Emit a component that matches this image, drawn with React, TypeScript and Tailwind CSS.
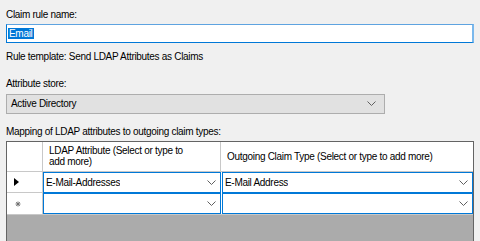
import React from 'react'

const FONT = { fontFamily: '"Liberation Sans", Arial, sans-serif' }

function Chevron() {
  return (
    <svg width="9" height="6" viewBox="0 0 9 6" className="shrink-0">
      <polyline points="0.5,0.5 4.5,4.5 8.5,0.5" fill="none" stroke="#606060" strokeWidth="1" />
    </svg>
  )
}

function ComboCell({ value, className }: { value?: string; className: string }) {
  return (
    <div className={`flex items-center justify-between border border-[#0078d7] bg-white pl-[2px] pr-[4px] ${className}`}>
      <span className="truncate">{value}</span>
      <Chevron />
    </div>
  )
}

export default function App() {
  return (
    <div
      className="w-[480px] h-[241px] overflow-hidden bg-[#f0f0f0] px-[6px] pt-[9px] text-[10px] leading-[12px] tracking-[-0.3px] text-black"
      style={FONT}
    >
      <div>Claim rule name:</div>

      {/* name input */}
      <div className="mt-[3px] h-[19px] w-[468px] border border-[#0078d7] border-t-[#5ea3e0] border-r-2 border-r-[#7ab8ec] bg-white flex items-center pl-[1px]">
        <span className="bg-[#0078d7] text-white px-[1px] leading-[11px]">Email</span>
      </div>

      <div className="mt-[8px]">Rule template: Send LDAP Attributes as Claims</div>

      <div className="mt-[15px]">Attribute store:</div>

      {/* attribute store select */}
      <div className="mt-[4px] h-[20px] w-[379px] border border-[#adadad] bg-[#e1e1e1] flex items-center justify-between pl-[4px] pr-[8px]">
        <span>Active Directory</span>
        <Chevron />
      </div>

      <div className="mt-[12px]">Mapping of LDAP attributes to outgoing claim types:</div>

      {/* mapping grid */}
      <div className="mt-[3px] w-[468px] h-[110px] border border-[#646464] bg-[#ababab] flex flex-col">
        <div className="flex h-[30px] bg-white">
          <div className="w-[36px] border-r border-b border-[#c8c8c8]" />
          <div className="w-[178px] border-r border-b border-[#c8c8c8] pl-[6px] pt-[3px] leading-[11px]">
            LDAP Attribute (Select or type to
            <br />
            add more)
          </div>
          <div className="flex-1 border-b border-[#c8c8c8] pl-[6px] flex items-center">
            Outgoing Claim Type (Select or type to add more)
          </div>
        </div>

        <div className="flex h-[21px] bg-white">
          <div className="w-[36px] border-r border-b border-[#c8c8c8] flex items-center pl-[7px]">
            <svg width="5" height="8" viewBox="0 0 5 8">
              <polygon points="0,0 5,4 0,8" fill="#000" />
            </svg>
          </div>
          <ComboCell value="E-Mail-Addresses" className="w-[178px]" />
          <div className="w-[1px] bg-white" />
          <ComboCell value="E-Mail Address" className="flex-1" />
        </div>

        <div className="flex h-[22px] bg-white border-b border-[#c8c8c8]">
          <div className="w-[36px] border-r border-[#c8c8c8] flex items-center pl-[8px]">
            <svg width="6" height="6" viewBox="0 0 6 6">
              <g stroke="#707070" strokeWidth="1">
                <line x1="3" y1="0.5" x2="3" y2="5.5" />
                <line x1="0.5" y1="3" x2="5.5" y2="3" />
                <line x1="1.2" y1="1.2" x2="4.8" y2="4.8" />
                <line x1="4.8" y1="1.2" x2="1.2" y2="4.8" />
              </g>
            </svg>
          </div>
          <ComboCell className="w-[178px]" />
          <div className="w-[1px] bg-white" />
          <ComboCell className="flex-1" />
        </div>
      </div>
    </div>
  )
}
